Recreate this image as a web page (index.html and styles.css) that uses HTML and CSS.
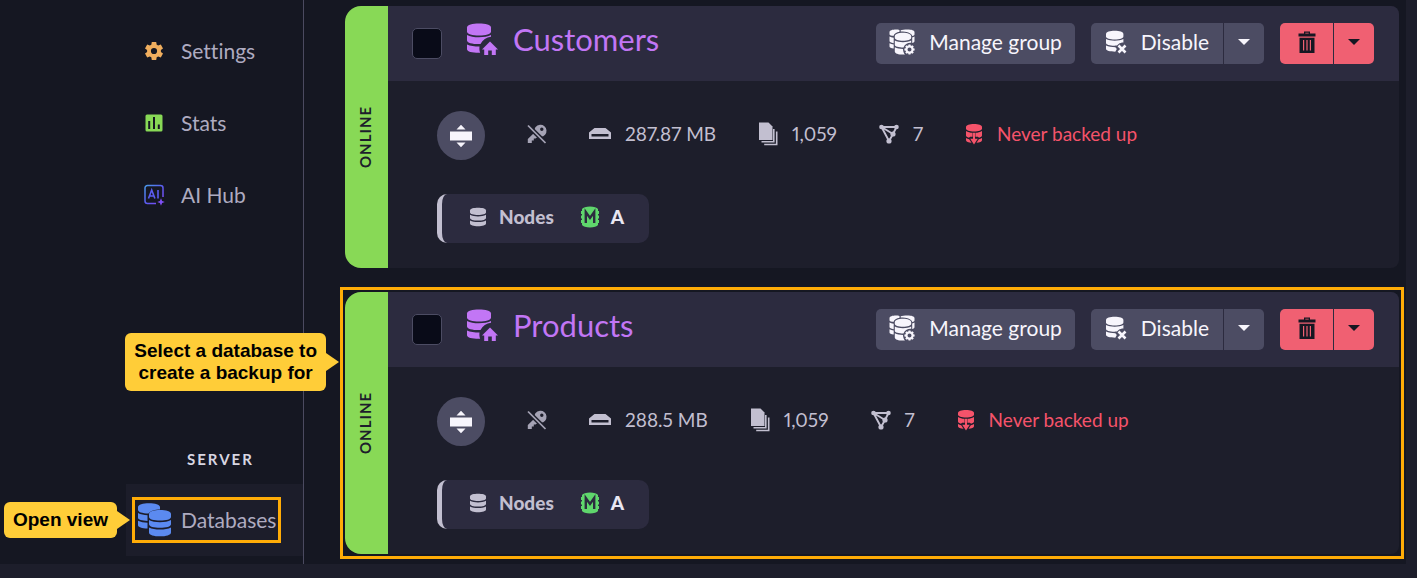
FILE: index.html
```html
<!DOCTYPE html>
<html lang="en">
<head>
  <meta charset="UTF-8">
  <meta name="viewport" content="width=device-width, initial-scale=1.0">
  <title>Databases</title>
  <link rel="stylesheet" href="styles.css">
</head>
<body>
  <!-- Icon set -->
  <svg class="icon-set" aria-hidden="true">
    <symbol id="icon-gear" viewBox="0 0 20 20">
      <path fill-rule="evenodd" d="M7.300 3.700L7.800 1h4.400l.500 2.700 1.500.9 2.600-1 2.200 3.800-2.100 1.700v1.800l2.100 1.700-2.200 3.800-2.600-1-1.500.9-.500 2.700H7.800l-.500-2.700-1.500-.9-2.600 1L1 12.600l2.100-1.700V9.100L1 7.400l2.200-3.800 2.600 1zM10 6.900a3.100 3.100 0 1 0 0 6.200 3.100 3.100 0 0 0 0-6.200z"/>
    </symbol>
    <symbol id="icon-stats" viewBox="0 0 20 20">
      <path fill-rule="evenodd" d="M3 1.500h14a1.500 1.500 0 0 1 1.500 1.500v14a1.500 1.500 0 0 1-1.500 1.500H3A1.500 1.500 0 0 1 1.500 17V3A1.500 1.500 0 0 1 3 1.500zM4.200 8v8h2V8zM9 4v12h2V4zm4.800 7.500V16h2v-4.500z"/>
    </symbol>
    <symbol id="icon-ai" viewBox="0 0 22 22">
      <linearGradient id="ai-fill" x1="0" y1="0" x2="1" y2="1">
        <stop offset="0" stop-color="#4a9bea"/>
        <stop offset="0.500" stop-color="#5a5cf0"/>
        <stop offset="1" stop-color="#8348f5"/>
      </linearGradient>
      <path d="M20 13V4a2.500 2.500 0 0 0-2.500-2.500h-13A2.500 2.500 0 0 0 2 4v13a2.500 2.500 0 0 0 2.500 2.500H13" fill="none" stroke="url(#ai-fill)" stroke-width="1.500"/>
      <path d="M5.500 14.500l3.200-8.500 3.200 8.500M6.700 12h4M15 6v8.500" fill="none" stroke="#5b5cf0" stroke-width="1.600"/>
      <path d="M18 14.200l1.100 2.700 2.700 1.100-2.700 1.100-1.100 2.700-1.100-2.700-2.700-1.100 2.700-1.100z" fill="#8050f5"/>
    </symbol>
    <symbol id="icon-db" viewBox="0 0 20 20">
      <path d="M2 3.500C2 1.500 6 .800 10 .800s8 .700 8 2.700v2C18 7 14.500 8 10 8S2 7 2 5.500z"/>
      <path d="M2 7.800C4 9 7 9.400 10 9.400s6-.400 8-1.600V11c0 1.600-3.500 2.600-8 2.600S2 12.600 2 11z"/>
      <path d="M2 13.400C4 14.600 7 15 10 15s6-.400 8-1.600v3.100c0 1.700-3.500 2.700-8 2.700s-8-1-8-2.700z"/>
    </symbol>
    <symbol id="icon-databases" viewBox="0 0 36 36">
      <path d="M2 5c0-2.500 5-3.800 11-3.800S24 2.500 24 5v2.500c-5 .2-9.500 1-11.500 4C6 11.500 2 10 2 7.800z"/>
      <path d="M2 11c2.500 1.400 6 2 9.500 2.200V19C6 18.800 2 17.600 2 15.800z"/>
      <path d="M2 18.700c2.500 1.300 6 1.900 9.500 2v5.800C6 26.300 2 25 2 23.200z"/>
      <path d="M13 12c0-2.600 5-3.900 11-3.900S35 9.400 35 12v3c0 2.300-5 3.600-11 3.600S13 17.300 13 15z"/>
      <path d="M13 18c2.800 1.600 6.500 2.200 11 2.200S32.200 19.600 35 18v4.200c0 2.300-5 3.600-11 3.600s-11-1.300-11-3.600z"/>
      <path d="M13 25.400c2.800 1.500 6.500 2.100 11 2.100s8.200-.600 11-2.100v5c0 2.500-5 3.900-11 3.900s-11-1.400-11-3.900z"/>
    </symbol>
    <symbol id="icon-db-home" viewBox="0 0 32 32">
      <path d="M1 4.500C1 1.800 6.500.500 13 .500s12 1.300 12 4v4c0 2.700-5.500 4-12 4S1 11.200 1 8.500z"/>
      <path d="M1 12c3 1.600 7 2.300 12 2.300 4.800 0 9-.700 12-2.200v1.700c-4.500.700-8.500 3-10.500 7.200C7 21.200 1 20 1 17.400z"/>
      <path d="M1 21.500c3 1.400 7.500 2 12.500 2-.300 2.500 0 4.500.700 6.300C7 30 1 28.800 1 26.300z"/>
      <path d="M24 18.500l8 8h-2.200V32h-4v-4.500h-3.600V32h-4v-5.500H16z"/>
    </symbol>
    <symbol id="icon-group" viewBox="0 0 26 26">
      <path d="M.500 3c0-1.600 3-2.500 6.500-2.500 1.300 0 2.500.100 3.500.400V2.800C7.500 3.500 5 4.600 4.700 6.800H3C1.500 6.500.500 5.900.500 5.200z"/>
      <path d="M11.700 2.600V1.300C13 .700 15.500.500 18.500.500c4 0 7 .9 7 2.500v2.500c0 .8-.9 1.300-2.300 1.600C22.500 3.800 17.500 2.600 11.700 2.600z"/>
      <path d="M5.800 7.200c0-2.200 3.500-3.500 8.200-3.500s8.200 1.300 8.200 3.500v1.600c0 1.900-3.700 3-8.200 3s-8.200-1.100-8.200-3z"/>
      <path d="M.500 7.600c1 .6 2.400 1 4.200 1.200v5.400c-2.700-.4-4.200-1.200-4.200-2.200zM.500 14.200c1 .6 2.400 1 4.200 1.200v4.200C2 19.200.500 18.400.500 17.400zM25.500 7.600c-.6.500-1.400.8-2.300 1V14c1.500-.4 2.300-1 2.300-2z"/>
      <path d="M5.800 11.600c2 1.200 5 1.600 8.200 1.600s6.200-.500 8.200-1.700v2.200c-3.500-.2-6.700 1.500-7.700 4.700-4.700 0-8.700-.9-8.700-2.700zM5.800 18.300c2 1.200 5 1.600 8.200 1.600 0 2.200.7 4.200 2 5.600-5.200.4-10.200-.600-10.200-3z"/>
      <circle cx="20.500" cy="20.500" r="3.100" fill="none" stroke="currentColor" stroke-width="2.200"/>
      <path d="M20.500 15.400v2M20.500 23.600v2M15.400 20.500h2M23.600 20.500h2M16.900 16.900l1.400 1.400M22.700 22.700l1.400 1.400M24.100 16.900l-1.400 1.400M18.300 22.700l-1.400 1.400" stroke="currentColor" stroke-width="2"/>
    </symbol>
    <symbol id="icon-db-off" viewBox="0 0 22 24">
      <path d="M1 4c0-2.200 4-3.200 8.700-3.200s8.700 1 8.700 3.200v2.400c0 2-4 3-8.700 3S1 8.400 1 6.400z"/>
      <path d="M1 9c2.300 1.300 5.300 1.700 8.700 1.700s6.400-.4 8.700-1.700v3.600c-2 0-3.400.5-4.800 1.500l-1.600 1.500C6 16 1 15 1 13z"/>
      <path d="M1 15.600c2.400 1.300 5.800 1.700 9.400 1.700l1.400 1.700-1.500 2.700C5 21.700 1 20.600 1 18.800z"/>
      <path d="M13.500 15.500l7 7M20.500 15.500l-7 7" stroke="currentColor" stroke-width="2.600"/>
    </symbol>
    <symbol id="icon-trash" viewBox="0 0 18 22">
      <path fill-rule="evenodd" d="M6 .500h6V2.500h5.500v3H.500v-3H6zm1.300 1.200v.8h3.400v-.800zM1.500 6.700h15V22h-15zM5 9v10.500h1.200V9zm3.400 0v10.500h1.200V9zm3.400 0v10.500H13V9z"/>
    </symbol>
    <symbol id="icon-caret" viewBox="0 0 12 6">
      <path d="M0 0h12L6 6z"/>
    </symbol>
    <symbol id="icon-expand" viewBox="0 0 24 24">
      <path d="M12 .800L16.500 5.500h-9zM1 7.500h22v9H1zM7.500 18.500h9L12 23.200z"/>
    </symbol>
    <symbol id="icon-key-off" viewBox="0 0 20 20">
      <path fill-rule="evenodd" d="M13 .800a6 6 0 0 1 1 12l-2.500-.3-3 2H6.800v2H4.800v2.500H.800v-4L7.500 8.500A6 6 0 0 1 13 .800zM14.800 3.600a1.700 1.700 0 1 0 0 3.400 1.700 1.700 0 0 0 0-3.400z"/>
      <path d="M1 1.500L19 19.500" fill="none" stroke="#1d1e2b" stroke-width="4.500"/>
      <path d="M1 1.500L18.500 19" fill="none" stroke="currentColor" stroke-width="1.700"/>
    </symbol>
    <symbol id="icon-disk" viewBox="0 0 22 20">
      <path fill-rule="evenodd" d="M5.500 4h11L22 8.500V15H0V8.500zM2.500 10v2.400h17V10z"/>
    </symbol>
    <symbol id="icon-docs" viewBox="0 0 20 24">
      <path d="M1 .500h9.500l4 4V18H1z"/>
      <path d="M3.500 19.700h12.300V7M6.200 22.500h12.500V9.500" fill="none" stroke="currentColor" stroke-width="1.600"/>
    </symbol>
    <symbol id="icon-graph" viewBox="0 0 20 20">
      <path d="M2.500 3h15L14 10M2.500 3l7.500 14 4-7L2.500 3" fill="none" stroke="currentColor" stroke-width="1.900"/>
      <circle cx="2.500" cy="3" r="2.300"/>
      <circle cx="17.500" cy="3" r="2.300"/>
      <circle cx="14" cy="10" r="2.600"/>
      <circle cx="10" cy="17" r="2.600"/>
    </symbol>
    <symbol id="icon-backup" viewBox="0 0 18 22">
      <path d="M1 4c0-2 3.500-3 8-3s8 1 8 3v1.500c0 2-3.500 3-8 3s-8-1-8-3z"/>
      <path d="M1 8c2 1.300 4 1.700 6.600 1.800v4H5l-1 1c-1.800-.500-3-1.200-3-2.200zM17 8c-2 1.300-4 1.700-6.600 1.800v4H13l1 1c1.800-.500 3-1.200 3-2.200z"/>
      <path d="M1 15c1 .6 2 1 3.200 1.300l2.300 3.500C3.500 19.600 1 18.800 1 17.200zM17 15c-1 .6-2 1-3.200 1.300l-2.300 3.500c3-.200 5.500-1 5.500-2.600zM8 9.800h2v6h2.800L9 21.500l-3.800-5.700H8z"/>
    </symbol>
    <symbol id="icon-member" viewBox="0 0 20 22">
      <path d="M2 3C3 1.500 6 .500 10 .500S17 1.500 18 3v2h1v3h-1v1.500h1v3h-1V14h1v3h-1v2c-1 1.500-4 2.500-8 2.500S3 20.500 2 19v-2H1v-3h1v-1.500H1v-3h1V8H1V5h1z"/>
      <path d="M5.800 17V6L10 12l4.200-6v11" fill="none" stroke="#2c2b3f" stroke-width="2.400"/>
    </symbol>
  </svg>

  <div class="layout">
    <nav class="sidebar">
      <ul class="menu">
        <li><a class="menu-item" href="#settings"><svg class="icon icon-sm orange"><use href="#icon-gear"/></svg>Settings</a></li>
        <li><a class="menu-item" href="#stats"><svg class="icon icon-sm green"><use href="#icon-stats"/></svg>Stats</a></li>
        <li><a class="menu-item" href="#ai-hub"><svg class="icon icon-md"><use href="#icon-ai"/></svg>AI Hub</a></li>
      </ul>
      <div class="menu-bottom">
        <h2 class="menu-title">SERVER</h2>
        <a class="menu-item active" href="#databases">
          <svg class="icon icon-lg blue"><use href="#icon-databases"/></svg>Databases
          <span class="highlight highlight-item"></span>
          <span class="callout callout-view">Open view</span>
        </a>
      </div>
    </nav>

    <main class="content">
      <section class="card">
        <div class="status">ONLINE</div>
        <div class="card-main">
          <header class="card-header">
            <input type="checkbox" class="select-box" aria-label="Select Customers">
            <h3 class="card-title"><svg class="icon-title"><use href="#icon-db-home"/></svg>Customers</h3>
            <div class="actions">
              <button class="btn btn-group"><svg class="icon-group"><use href="#icon-group"/></svg>Manage group</button>
              <div class="split">
                <button class="btn btn-disable"><svg class="icon-off"><use href="#icon-db-off"/></svg>Disable</button>
                <button class="btn btn-caret" aria-label="More disable options"><svg class="icon-caret"><use href="#icon-caret"/></svg></button>
              </div>
              <div class="split">
                <button class="btn btn-danger" aria-label="Delete"><svg class="icon-trash"><use href="#icon-trash"/></svg></button>
                <button class="btn btn-danger btn-caret" aria-label="More delete options"><svg class="icon-caret"><use href="#icon-caret"/></svg></button>
              </div>
            </div>
          </header>
          <div class="card-body">
            <div class="info">
              <button class="btn-expand" aria-label="Expand"><svg class="icon-expand"><use href="#icon-expand"/></svg></button>
              <span class="info-item"><svg class="icon muted"><use href="#icon-key-off"/></svg></span>
              <span class="info-item"><svg class="icon icon-wide"><use href="#icon-disk"/></svg>287.87 MB</span>
              <span class="info-item"><svg class="icon icon-tall"><use href="#icon-docs"/></svg>1,059</span>
              <span class="info-item"><svg class="icon"><use href="#icon-graph"/></svg>7</span>
              <span class="info-item danger"><svg class="icon icon-backup"><use href="#icon-backup"/></svg>Never backed up</span>
            </div>
            <div class="nodes">
              <span class="nodes-label"><svg class="icon"><use href="#icon-db"/></svg>Nodes</span>
              <a class="node" href="#node-a"><svg class="icon icon-member"><use href="#icon-member"/></svg>A</a>
            </div>
          </div>
        </div>
      </section>

      <section class="card">
        <div class="status">ONLINE</div>
        <div class="card-main">
          <header class="card-header">
            <input type="checkbox" class="select-box" aria-label="Select Products">
            <h3 class="card-title"><svg class="icon-title"><use href="#icon-db-home"/></svg>Products</h3>
            <div class="actions">
              <button class="btn btn-group"><svg class="icon-group"><use href="#icon-group"/></svg>Manage group</button>
              <div class="split">
                <button class="btn btn-disable"><svg class="icon-off"><use href="#icon-db-off"/></svg>Disable</button>
                <button class="btn btn-caret" aria-label="More disable options"><svg class="icon-caret"><use href="#icon-caret"/></svg></button>
              </div>
              <div class="split">
                <button class="btn btn-danger" aria-label="Delete"><svg class="icon-trash"><use href="#icon-trash"/></svg></button>
                <button class="btn btn-danger btn-caret" aria-label="More delete options"><svg class="icon-caret"><use href="#icon-caret"/></svg></button>
              </div>
            </div>
          </header>
          <div class="card-body">
            <div class="info">
              <button class="btn-expand" aria-label="Expand"><svg class="icon-expand"><use href="#icon-expand"/></svg></button>
              <span class="info-item"><svg class="icon muted"><use href="#icon-key-off"/></svg></span>
              <span class="info-item"><svg class="icon icon-wide"><use href="#icon-disk"/></svg>288.5 MB</span>
              <span class="info-item"><svg class="icon icon-tall"><use href="#icon-docs"/></svg>1,059</span>
              <span class="info-item"><svg class="icon"><use href="#icon-graph"/></svg>7</span>
              <span class="info-item danger"><svg class="icon icon-backup"><use href="#icon-backup"/></svg>Never backed up</span>
            </div>
            <div class="nodes">
              <span class="nodes-label"><svg class="icon"><use href="#icon-db"/></svg>Nodes</span>
              <a class="node" href="#node-a"><svg class="icon icon-member"><use href="#icon-member"/></svg>A</a>
            </div>
          </div>
        </div>
        <span class="highlight highlight-card"></span>
        <span class="callout callout-card">Select a database to<br>create a backup for</span>
      </section>
    </main>
    <div class="gutter"></div>
  </div>
  <footer class="footer"></footer>
</body>
</html>
```
FILE: styles.css
```css
/* Reset some default styles */
* {
  box-sizing: border-box;
}

body, h2, h3, ul, li {
  margin: 0;
  padding: 0;
}

ul {
  list-style: none;
}

a {
  color: inherit;
  text-decoration: none;
}

/* Main styles */
body {
  font-family: Lato, sans-serif;
  font-size: 21px;
  line-height: 24px;
  font-variant-ligatures: none;
  font-variant-numeric: proportional-nums;
  background-color: #151722;
  color: #c2bfd0;
  display: flex;
  flex-direction: column;
  min-height: 100vh;
}

svg {
  fill: currentColor;
  flex-shrink: 0;
}

.icon-set {
  position: absolute;
  width: 0;
  height: 0;
}

.layout {
  display: flex;
  flex-grow: 1;
}

.gutter {
  width: 11px;
  background-color: #1d1e2b;
}

.footer {
  height: 14px;
  background-color: #1d1e2b;
}

/* Sidebar */
.sidebar {
  width: 304px;
  flex-shrink: 0;
  padding: 15px 0 8px 126px;
  border-right: 1px solid #4b4a60;
  color: #aeabc0;
  display: flex;
  flex-direction: column;
  justify-content: space-between;
}

.menu-item {
  position: relative;
  display: flex;
  align-items: center;
  gap: 9px;
  height: 72px;
  padding-left: 10px;
}

.menu-item.active {
  background-color: #1c1d2a;
}

.menu-title {
  padding-left: 61px;
  margin-bottom: 13px;
  font-size: 15px;
  line-height: 24px;
  letter-spacing: 2px;
  color: #d8d6e2;
}

/* Icons */
.icon {
  width: 20px;
  height: 20px;
}

.icon-sm {
  margin: 0 8px;
}

.icon-md {
  width: 22px;
  height: 22px;
  margin: 0 7px;
}

.icon-lg {
  width: 36px;
  height: 36px;
}

.icon-wide {
  width: 22px;
}

.icon-tall {
  height: 24px;
}

.icon-backup {
  width: 18px;
  height: 22px;
}

.icon-member {
  height: 22px;
  color: #5fd66c;
}

.icon-title {
  width: 32px;
  height: 32px;
}

.icon-group {
  width: 26px;
  height: 26px;
}

.icon-off {
  width: 22px;
  height: 24px;
}

.icon-trash {
  width: 18px;
  height: 22px;
}

.icon-caret {
  width: 12px;
  height: 6px;
}

.icon-expand {
  width: 24px;
  height: 24px;
}

.orange {
  color: #f0ae5e;
}

.green {
  color: #88d956;
}

.blue {
  color: #5b8af0;
}

.muted {
  color: #a5a3b5;
}

/* Cards */
.content {
  flex-grow: 1;
  padding: 6px 7px 10px 41px;
  display: flex;
  flex-direction: column;
  gap: 24px;
}

.card {
  position: relative;
  display: flex;
}

/* Rotated half a turn so the label reads upwards */
.status {
  width: 43px;
  padding-left: 4px;
  border-radius: 0 16px 16px 0;
  background-color: #88d956;
  color: #1d1e2b;
  font-size: 15px;
  font-weight: bold;
  letter-spacing: 1px;
  writing-mode: vertical-rl;
  transform: rotate(180deg);
  display: flex;
  align-items: center;
  justify-content: center;
}

.card-main {
  flex-grow: 1;
  border-radius: 0 8px 8px 0;
  background-color: #1d1e2b;
  overflow: hidden;
}

.card-header {
  display: flex;
  align-items: center;
  height: 75px;
  padding: 0 25px 0 24px;
  background-color: #2c2b3f;
}

.select-box {
  appearance: none;
  width: 30px;
  height: 31px;
  margin: 0;
  border: 1px solid #4c4c63;
  border-radius: 5px;
  background-color: #090b18;
}

.card-title {
  display: flex;
  align-items: center;
  gap: 15px;
  margin: 0 auto 10px 24px;
  font-size: 31px;
  line-height: 36px;
  font-weight: normal;
  color: #c276f5;
}

.actions {
  display: flex;
  gap: 16px;
}

.split {
  display: flex;
  gap: 1px;
}

.btn {
  display: flex;
  align-items: center;
  justify-content: center;
  height: 41px;
  padding: 0 13px 3px;
  border: none;
  border-radius: 5px;
  background-color: #4c4c63;
  color: #f7f5fc;
  font: inherit;
  cursor: pointer;
}

.btn-group, .btn-disable {
  gap: 14px;
}

.btn-disable {
  padding: 0 14px 3px;
}

.split .btn:first-child {
  border-radius: 5px 0 0 5px;
}

.split .btn:last-child {
  border-radius: 0 5px 5px 0;
}

.btn-danger {
  width: 53px;
  background-color: #f06072;
  color: #151722;
}

.btn-caret {
  width: 40px;
}

.card-body {
  padding: 30px 24px 25px 49px;
}

.info {
  display: flex;
  align-items: center;
  gap: 42px;
  font-size: 19px;
}

.btn-expand {
  display: flex;
  align-items: center;
  justify-content: center;
  width: 48px;
  height: 49px;
  padding: 0;
  border: none;
  border-radius: 50%;
  background-color: #4c4c63;
  color: #f7f5fc;
}

.info-item {
  display: flex;
  align-items: center;
  gap: 14px;
  padding-bottom: 3px;
}

.danger {
  color: #f5536a;
}

.nodes {
  display: inline-flex;
  align-items: center;
  gap: 26px;
  height: 49px;
  margin-top: 34px;
  padding: 0 25px 3px 26px;
  border-left: 5px solid #c2bfd0;
  border-radius: 10px;
  background-color: #2c2b3f;
  font-size: 19px;
  font-weight: 900;
  vertical-align: top;
}

.nodes-label, .node {
  display: flex;
  align-items: center;
  gap: 11px;
}

.node {
  color: #e9e7f2;
}

/* Highlights and callouts */
.highlight {
  position: absolute;
  border: 3px solid #ffac07;
}

.highlight-item {
  inset: 13px 22px 13px 6px;
}

.highlight-card {
  inset: -5px;
}

.callout {
  position: absolute;
  padding: 7px 9px;
  border-radius: 6px;
  background-color: #ffcd38;
  color: #000;
  font-family: "Liberation Sans", Arial, sans-serif;
  font-size: 19px;
  line-height: 22px;
  font-weight: bold;
  text-align: center;
  white-space: nowrap;
}

.callout::after {
  content: "";
  position: absolute;
  left: 100%;
  top: 50%;
  margin-top: -9px;
  border: 9px solid transparent;
  border-left: 13px solid #ffcd38;
  border-right: 0;
}

.callout-view {
  right: 186px;
  top: 18px;
}

.callout-card {
  right: calc(100% + 19px);
  top: 41px;
}
```
